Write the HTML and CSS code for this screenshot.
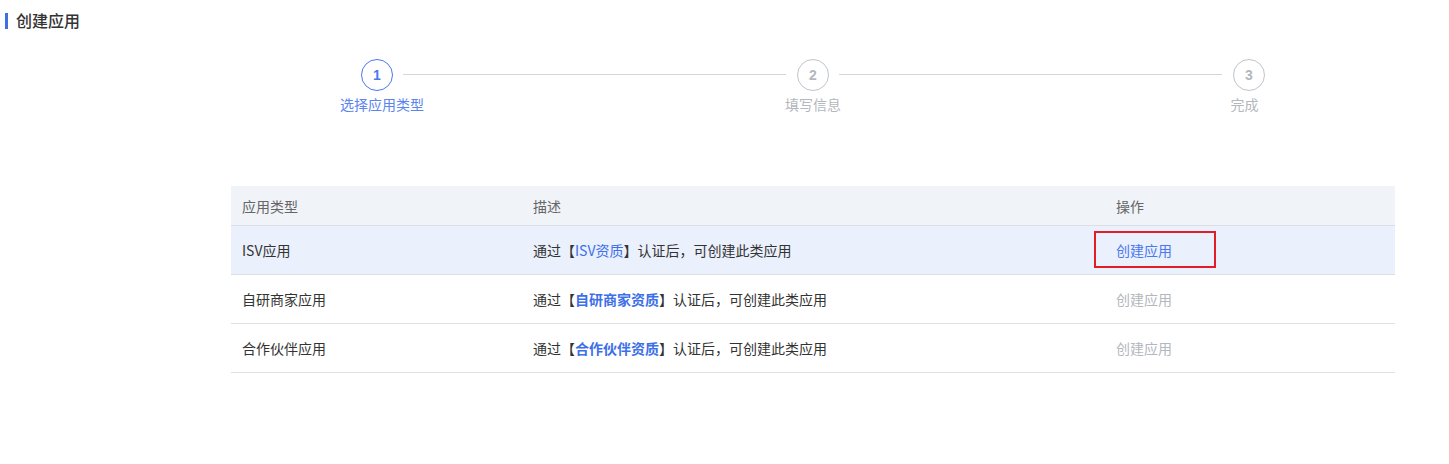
FILE: index.html
```html
<!DOCTYPE html>
<html lang="zh">
<head>
<meta charset="utf-8">
<link rel="stylesheet" href="styles.css">
</head>
<body>
<div class="page">
  <div class="title">创建应用</div>
  <div class="steps">
    <div class="step active first">
      <div class="head"><div class="circle">1</div><div class="label">选择应用类型</div></div>
      <div class="line"></div>
    </div>
    <div class="step">
      <div class="head"><div class="circle">2</div><div class="label">填写信息</div></div>
      <div class="line"></div>
    </div>
    <div class="step last">
      <div class="head"><div class="circle">3</div><div class="label">完成</div></div>
    </div>
  </div>
  <div class="table">
    <div class="row header">
      <div class="cell">应用类型</div>
      <div class="cell">描述</div>
      <div class="cell">操作</div>
    </div>
    <div class="row hover">
      <div class="cell">ISV应用</div>
      <div class="cell">通过<span class="br">【</span><span class="q">ISV资质</span><span class="br">】</span>认证后，可创建此类应用</div>
      <div class="cell"><span class="act on">创建应用<span class="mark"></span></span></div>
    </div>
    <div class="row">
      <div class="cell">自研商家应用</div>
      <div class="cell">通过<span class="br">【</span><span class="q b">自研商家资质</span><span class="br">】</span>认证后，可创建此类应用</div>
      <div class="cell"><span class="act">创建应用</span></div>
    </div>
    <div class="row">
      <div class="cell">合作伙伴应用</div>
      <div class="cell">通过<span class="br">【</span><span class="q b">合作伙伴资质</span><span class="br">】</span>认证后，可创建此类应用</div>
      <div class="cell"><span class="act">创建应用</span></div>
    </div>
  </div>
</div>
</body>
</html>
```
FILE: styles.css
```css
* { box-sizing: border-box; }
html, body { margin: 0; padding: 0; background: #fff; }
body {
  font-family: "Microsoft YaHei", "Noto Sans CJK SC", "Liberation Sans", sans-serif;
  font-size: 14px;
  color: #333;
}
.page { width: 1449px; height: 464px; }
.title {
  margin: 13px 0 0 5px;
  padding-left: 8px;
  border-left: 3px solid #3f6fe6;
  height: 16px;
  line-height: 15px;
  font-size: 16px;
  font-weight: 500;
  color: #333;
}
.steps {
  display: flex;
  margin: 30px 0 0 361px;
  width: 904px;
}
.step { display: flex; flex: 1; align-items: flex-start; }
.step.last { flex: 0 0 32px; }
.head {
  width: 32px;
  display: flex;
  flex-direction: column;
  align-items: center;
}
.circle {
  width: 32px; height: 32px;
  border-radius: 50%;
  border: 1px solid #c0c4cc;
  color: #b4b7bd;
  font-family: "Liberation Sans", sans-serif;
  font-weight: bold;
  font-size: 14px;
  display: flex; align-items: center; justify-content: center;
}
.label {
  margin-top: 3px;
  white-space: nowrap;
  color: #b4b7bd;
  font-size: 14px;
  line-height: 20px;
}
.step.first .label { margin-left: 10px; }
.step.last .label { margin-right: 9px; }
.step.active .circle { border-color: #4a78ee; color: #4a78ee; }
.step.active .label { color: #5a84ee; }
.line {
  flex: 1;
  height: 1px;
  background: #d4d6db;
  margin: 15px 11px 0 10px;
}
.table {
  margin: 72px 0 0 231px;
  width: 1164px;
}
.row {
  display: grid;
  grid-template-columns: 291px 583px 290px;
  height: 49px;
  align-items: center;
  border-bottom: 1px solid #dcdfe6;
}
.row.header { height: 40px; background: #f0f3f8; color: #666; border-bottom-color: #dcdfe6; }
.row.hover { background: #eaf0fc; }
.cell { padding-left: 11px; white-space: nowrap; }
.br { color: #333; }
.q { color: #3d6fe8; }
.q.b { font-weight: bold; }
.act { color: #b4b7bd; position: relative; }
.act.on { color: #4a78ee; }
.mark {
  position: absolute;
  left: -22px; top: -9px;
  width: 122px; height: 37px;
  border: 2px solid #e21d28;
}
```
